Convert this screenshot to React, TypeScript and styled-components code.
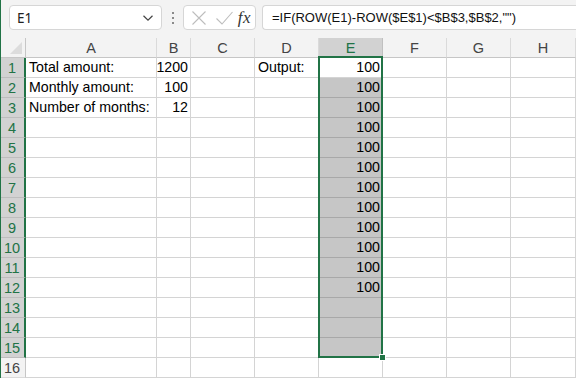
import React from "react";
import styled, { createGlobalStyle } from "styled-components";

const GlobalStyle = createGlobalStyle`
  html, body {
    margin: 0;
    padding: 0;
    background: #ffffff;
    overflow: hidden;
  }
  body {
    font-family: "Liberation Sans", Arial, sans-serif;
  }
`;

const GREEN = "#217346";
const GRID = "#d4d4d4";

const Window = styled.div`
  width: 576px;
  height: 378px;
  box-sizing: border-box;
  border-left: 1px solid ${GREEN};
  background: #f3f3f3;
  overflow: hidden;
`;

const Toolbar = styled.div`
  height: 38px;
  display: flex;
  align-items: flex-start;
  padding: 5px 0 0 8px;
  box-sizing: border-box;
  & > * {
    flex-shrink: 0;
  }
`;

const NameBox = styled.div`
  width: 153px;
  height: 25px;
  box-sizing: border-box;
  background: #fff;
  border: 1px solid #d6d6d6;
  border-radius: 4px;
  display: flex;
  align-items: center;
  justify-content: space-between;
  padding: 0 7px 0 7px;
  font-family: "Noto Sans", "Open Sans", sans-serif;
  font-size: 13.5px;
  color: #222;
`;

const Grip = styled.div`
  width: 21px;
  height: 25px;
  display: flex;
  flex-direction: column;
  align-items: center;
  justify-content: center;
  gap: 3px;
`;

const Dot = styled.span`
  width: 2px;
  height: 2px;
  background: #8a8a8a;
`;

const FxBox = styled(NameBox)`
  width: 73px;
  padding: 0 4px 0 6px;
`;

const Spacer = styled.span`
  width: 4px;
`;

const FxLabel = styled.span`
  font-family: "Liberation Serif", "DejaVu Serif", serif;
  font-style: italic;
  font-size: 17px;
  color: #333;
  margin-left: 2px;
  letter-spacing: 0.5px;
`;

const FormulaBox = styled(NameBox)`
  margin-left: 6px;
  width: 330px;
  border-right: none;
  border-radius: 4px 0 0 4px;
  justify-content: flex-start;
  padding-left: 9px;
  font-family: "Liberation Sans", Arial, sans-serif;
  font-size: 13px;
  color: #111;
`;

const Sheet = styled.div`
  display: grid;
  grid-template-columns: 25px 131px 34px 64px 64px 64px 64px 64px 65px;
  grid-auto-rows: 20px;
  background: #fff;
`;

const Corner = styled.div`
  background: #f3f3f3;
  border-right: 1px solid #c6c6c6;
  border-bottom: 1px solid #c6c6c6;
  box-sizing: border-box;
  position: relative;
  &::after {
    content: "";
    position: absolute;
    right: 3px;
    bottom: 3px;
    width: 0;
    height: 0;
    border-left: 12px solid transparent;
    border-bottom: 12px solid #dcdcdc;
  }
`;

const ColHead = styled.div<{ $active?: boolean }>`
  background: ${(p) => (p.$active ? "#d2d2d2" : "#f3f3f3")};
  color: ${(p) => (p.$active ? GREEN : "#444")};
  border-right: 1px solid ${(p) => (p.$active ? "#c0c0c0" : "#dadada")};
  border-bottom: 1px solid #c6c6c6;
  box-sizing: border-box;
  display: flex;
  align-items: center;
  justify-content: center;
  font-size: 14.5px;
  padding-top: 1px;
`;

const RowHead = styled.div<{ $active?: boolean }>`
  background: ${(p) => (p.$active ? "#d2d2d2" : "#f3f3f3")};
  color: ${(p) => (p.$active ? GREEN : "#444")};
  border-right: ${(p) => (p.$active ? `2px solid ${GREEN}` : "1px solid #c6c6c6")};
  border-bottom: 1px solid ${(p) => (p.$active ? "#bdbdbd" : "#dadada")};
  box-sizing: border-box;
  display: flex;
  align-items: center;
  justify-content: center;
  font-size: 14.5px;
  padding-right: ${(p) => (p.$active ? "1px" : "2px")};
`;

const Cell = styled.div<{ $num?: boolean; $shade?: boolean }>`
  position: relative;
  background: ${(p) => (p.$shade ? "#c6c6c6" : "#fff")};
  border-right: 1px solid ${(p) => (p.$shade ? "#c6c6c6" : GRID)};
  border-bottom: 1px solid ${(p) => (p.$shade ? "#a8a8a8" : GRID)};
  box-sizing: border-box;
  display: flex;
  align-items: flex-end;
  justify-content: ${(p) => (p.$num ? "flex-end" : "flex-start")};
  padding: 0 2px 2px 3px;
  font-size: 14.2px;
  color: #000;
  white-space: nowrap;
`;

/* selection outline over E1:E15, anchored to the active cell */
const Selection = styled.div<{ $rows: number }>`
  position: absolute;
  left: -1px;
  top: -2px;
  width: 65px;
  height: ${(p) => p.$rows * 20 + 2}px;
  box-sizing: border-box;
  border: 2px solid ${GREEN};
  pointer-events: none;
  z-index: 2;
  &::after {
    content: "";
    position: absolute;
    right: -5px;
    bottom: -5px;
    width: 5px;
    height: 5px;
    background: ${GREEN};
    border: 1px solid #fff;
  }
`;

const cols = ["A", "B", "C", "D", "E", "F", "G", "H"];

const data: Record<number, Record<string, { v: string; n?: boolean }>> = {
  1: { A: { v: "Total amount:" }, B: { v: "1200", n: true }, D: { v: "Output:" } },
  2: { A: { v: "Monthly amount:" }, B: { v: "100", n: true } },
  3: { A: { v: "Number of months:" }, B: { v: "12", n: true } },
};

const Chevron = () => (
  <svg width="12" height="8" viewBox="0 0 12 8">
    <path d="M1.5 1.8 L6 6.2 L10.5 1.8" fill="none" stroke="#444" strokeWidth="1.2" />
  </svg>
);

const CrossIcon = () => (
  <svg width="18" height="18" viewBox="0 0 18 18">
    <path d="M2.5 2.5 L15.5 15.5 M15.5 2.5 L2.5 15.5" stroke="#bdbdbd" strokeWidth="1.1" />
  </svg>
);

const CheckIcon = () => (
  <svg width="19" height="18" viewBox="0 0 19 18">
    <path d="M1.5 9.5 L7 15 L17.5 3" fill="none" stroke="#bdbdbd" strokeWidth="1.1" />
  </svg>
);

const App = () => {
  const rows = Array.from({ length: 16 }, (_, i) => i + 1);
  return (
    <Window>
      <GlobalStyle />
      <Toolbar>
        <NameBox>
          <span>E1</span>
          <Chevron />
        </NameBox>
        <Grip>
          <Dot />
          <Dot />
          <Dot />
        </Grip>
        <FxBox>
          <CrossIcon />
          <Spacer />
          <CheckIcon />
          <FxLabel>fx</FxLabel>
        </FxBox>
        <FormulaBox>=IF(ROW(E1)-ROW($E$1)&lt;$B$3,$B$2,"")</FormulaBox>
      </Toolbar>
      <Sheet>
        <Corner />
        {cols.map((c) => (
          <ColHead key={c} $active={c === "E"}>
            {c}
          </ColHead>
        ))}
        {rows.map((r) => (
          <React.Fragment key={r}>
            <RowHead $active={r <= 15}>{r}</RowHead>
            {cols.map((c) => {
              const d = data[r]?.[c];
              if (c === "E") {
                return (
                  <Cell key={c} $num $shade={r >= 2 && r <= 15}>
                    {r <= 12 ? "100" : ""}
                    {r === 1 && <Selection $rows={15} />}
                  </Cell>
                );
              }
              return (
                <Cell key={c} $num={d?.n}>
                  {d?.v ?? ""}
                </Cell>
              );
            })}
          </React.Fragment>
        ))}
      </Sheet>
    </Window>
  );
};

export default App;
